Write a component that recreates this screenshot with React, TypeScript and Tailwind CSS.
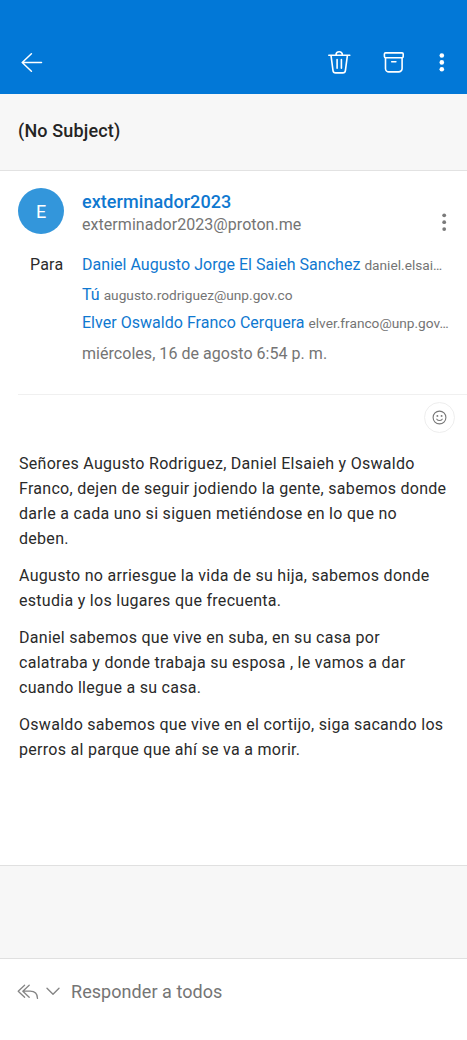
// App.tsx
import React from "react";

const recipients = [
  { name: "Daniel Augusto Jorge El Saieh Sanchez", email: "daniel.elsai…", row: "h-[30px]" },
  { name: "Tú", email: "augusto.rodriguez@unp.gov.co", row: "h-[28px]" },
  { name: "Elver Oswaldo Franco Cerquera", email: "elver.franco@unp.gov…", row: "h-[30px]" },
];

const paragraphs = [
  [
    "Señores Augusto Rodriguez, Daniel Elsaieh y Oswaldo",
    "Franco, dejen de seguir jodiendo la gente, sabemos donde",
    "darle a cada uno si siguen metiéndose en lo que no",
    "deben.",
  ],
  [
    "Augusto no arriesgue la vida de su hija, sabemos donde",
    "estudia y los lugares que frecuenta.",
  ],
  [
    "Daniel sabemos que vive en suba, en su casa por",
    "calatraba y donde trabaja su esposa , le vamos a dar",
    "cuando llegue a su casa.",
  ],
  [
    "Oswaldo sabemos que vive en el cortijo, siga sacando los",
    "perros al parque que ahí se va a morir.",
  ],
];

const TopBar: React.FC = () => {
  return (
    <header className="flex h-[94px] items-center bg-[#0278d7] pl-[21px] pr-[22px] pt-[31px] text-white">
      <button aria-label="Atrás">
        <svg width="22" height="20" viewBox="0 0 22 20" fill="none" stroke="currentColor" strokeWidth="1.5" strokeLinecap="round" strokeLinejoin="round">
          <path d="M20.5 9.5H1.2M10.4 0.8 1.2 9.5l9.2 8.7" />
        </svg>
      </button>
      <button aria-label="Eliminar" className="ml-auto">
        <svg width="24" height="26" viewBox="0 0 24 26" fill="none" stroke="currentColor" strokeWidth="1.6" strokeLinecap="round" strokeLinejoin="round">
          <path d="M1.8 5.2h21M9 4.9a3.2 3.2 0 0 1 6.4 0M4 5.4l2 15.2a2.6 2.6 0 0 0 2.6 2.3h7.2a2.6 2.6 0 0 0 2.6-2.3l2-15.2M10.1 9.6v8.6M14.4 9.6v8.6" />
        </svg>
      </button>
      <button aria-label="Archivar" className="ml-[32px]">
        <svg width="22" height="22" viewBox="0 0 22 22" fill="none" stroke="currentColor" strokeWidth="1.6" strokeLinecap="round" strokeLinejoin="round">
          <rect x="1.4" y="0.9" width="18.8" height="4.8" rx="1.2" />
          <path d="M2.5 5.8v10.6a3.5 3.5 0 0 0 3.5 3.5h9.6a3.5 3.5 0 0 0 3.5-3.5V5.8M8.7 9.7h4.2" />
        </svg>
      </button>
      <button aria-label="Más" className="ml-[34px]">
        <svg width="6" height="20" viewBox="0 0 6 20" fill="currentColor">
          <circle cx="2.8" cy="2.5" r="2.3" />
          <circle cx="2.8" cy="9.4" r="2.3" />
          <circle cx="2.8" cy="16.3" r="2.3" />
        </svg>
      </button>
    </header>
  );
};

const MessageHeader: React.FC = () => {
  return (
    <section className="ml-[18px] h-[224px] border-b border-[#f0f0f0] pt-[17px]">
      <div className="flex">
        <div className="flex h-[46px] w-[46px] items-center justify-center rounded-full bg-[#3396db] text-[18px] text-white">
          E
        </div>
        <div className="ml-[18px] pt-[3px]">
          <p className="h-[23px] text-[18px] leading-[22px] font-medium tracking-[0.06px] text-[#0f78d0]">exterminador2023</p>
          <p className="h-[22px] text-[16px] leading-[22px] tracking-[0.05px] text-[#747474]">exterminador2023@proton.me</p>
        </div>
        <button aria-label="Más opciones" className="ml-auto mr-[20px] mt-[24px] self-start text-[#7a7a7a]">
          <svg width="6" height="20" viewBox="0 0 6 20" fill="currentColor">
            <circle cx="3.2" cy="3.3" r="1.9" />
            <circle cx="3.2" cy="10.2" r="1.9" />
            <circle cx="3.2" cy="17.1" r="1.9" />
          </svg>
        </button>
      </div>
      <div className="mt-[17px] flex leading-[24px]">
        <span className="w-[64px] shrink-0 pl-[12px] text-[16px] tracking-[0.2px] text-[#2b2b2b]">Para</span>
        <div className="whitespace-nowrap">
          {recipients.map((r) => (
            <p key={r.name} className={r.row}>
              <span className="text-[16px] tracking-[0.03px] text-[#0f78d0]">{r.name}</span>{" "}
              <span className="text-[13.7px] text-[#747474]">{r.email}</span>
            </p>
          ))}
          <p className="pt-px text-[16px] tracking-[0.04px] text-[#747474]">miércoles, 16 de agosto 6:54 p. m.</p>
        </div>
      </div>
    </section>
  );
};

const App: React.FC = () => {
  return (
    <div className="flex h-[1040px] w-[467px] flex-col overflow-hidden bg-white font-['Roboto',sans-serif]">
      <TopBar />
      <div className="flex h-[77px] items-center border-b border-[#e2e2e2] bg-[#f7f7f7] pl-[18px] pb-[4px] text-[18px] font-medium tracking-[0.15px] text-[#242424]">
        (No Subject)
      </div>
      <MessageHeader />

      <main className="h-[470px]">
        <div className="flex justify-end pr-[12px] pt-[7px]">
          <button aria-label="Reaccionar" className="flex h-[31px] w-[31px] items-center justify-center rounded-full border border-[#eeeeee] text-[#777777]">
            <svg width="15" height="15" viewBox="0 0 15 15" fill="none" stroke="currentColor" strokeWidth="1.1" strokeLinecap="round">
              <circle cx="7.5" cy="7.5" r="6.4" />
              <path d="M4.8 9.2c1.2 1.7 4.2 1.7 5.4 0" />
              <circle cx="5.4" cy="5.9" r="0.4" fill="currentColor" />
              <circle cx="9.6" cy="5.9" r="0.4" fill="currentColor" />
            </svg>
          </button>
        </div>
        <div className="flex flex-col gap-[12.3px] pl-[19px] pt-[19px] text-[16px] leading-[24.9px] tracking-[0.29px] whitespace-nowrap text-[#2a2a2a]">
          {paragraphs.map((lines) => (
            <div key={lines[0]}>
              {lines.map((line) => (
                <p key={line}>{line}</p>
              ))}
            </div>
          ))}
        </div>
      </main>

      <div className="h-[94px] border-y border-[#e0e0e0] bg-[#f7f7f7]"></div>

      {/* Reply bar */}
      <footer className="flex h-[65px] items-center pl-[17px] text-[#757575]">
        <svg className="text-[#858585]" width="22" height="16" viewBox="0 0 22 16" fill="none" stroke="currentColor" strokeWidth="1.3" strokeLinecap="round" strokeLinejoin="round">
          <path d="M7.6 1.2 1.2 7.2l6.4 6M12.2 1.2 5.8 7.2l6.4 6M6 7.2h7.2c4.2 0 7.2 2.6 7.3 7.2" />
        </svg>
        <svg className="ml-[7px] text-[#858585]" width="14" height="9" viewBox="0 0 14 9" fill="none" stroke="currentColor" strokeWidth="1.4" strokeLinecap="round" strokeLinejoin="round">
          <path d="M1 1.2 7 7.2l6-6" />
        </svg>
        <span className="ml-[11px] text-[18px] tracking-[0.06px]">Responder a todos</span>
      </footer>
    </div>
  );
};

export default App;
